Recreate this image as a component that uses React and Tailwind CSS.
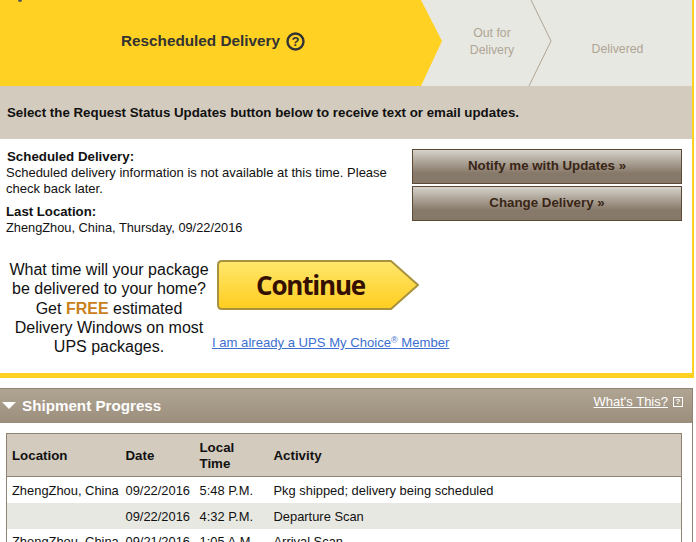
const rows = [
  { location: "ZhengZhou, China", date: "09/22/2016", time: "5:48 P.M.", activity: "Pkg shipped; delivery being scheduled" },
  { location: "", date: "09/22/2016", time: "4:32 P.M.", activity: "Departure Scan" },
  { location: "ZhengZhou, China", date: "09/21/2016", time: "1:05 A.M.", activity: "Arrival Scan" },
]

const ActionButton = ({ children }) => (
  <button className="block w-[270px] h-[35px] border border-[#5c4a36] bg-gradient-to-b from-[#d6d3cb] to-[#87796a] to-70% pb-[1px] text-[13.3px] font-bold text-[#3a2516]">
    {children}
  </button>
)

const App = () => {
  return (
    <div className="h-screen overflow-hidden bg-white font-['Liberation_Sans',Arial,sans-serif] text-[#111]">
      <div className="w-[694px] border-r-2 border-b-[5px] border-[#ffd123]">
        {/* status tracker */}
        <div className="relative h-[86px] bg-[#e8e8e2]">
          <svg className="absolute inset-0" width="692" height="86">
            <polygon points="0,0 421,0 442,41 421,86 0,86" fill="#ffd123" />
            <polyline points="531,0 551,41 529,86" fill="none" stroke="#afa595" strokeWidth="1" />
          </svg>
          <span className="absolute left-[18px] top-0 h-[2px] w-[4px] rounded-b-full bg-[#555]" />
          <div className="relative flex h-full items-center">
            <div className="flex w-[426px] items-center justify-center gap-[6px] pb-[3px] text-[15.3px] font-bold text-[#333]">
              Rescheduled Delivery
              <svg width="19" height="19" viewBox="0 0 19 19">
                <circle cx="9.5" cy="9.5" r="8" fill="none" stroke="#333" strokeWidth="2.4" />
                <text x="9.5" y="14" textAnchor="middle" fontSize="13" fontWeight="700" fill="#333">?</text>
              </svg>
            </div>
            <div className="ml-[7px] w-[118px] pb-[2px] text-center text-[12.3px] leading-[17px] text-[#afa595]">
              Out for
              <br />
              Delivery
            </div>
            <div className="ml-[4px] w-[125px] pt-[12px] text-center text-[12.3px] leading-[17px] text-[#afa595]">
              Delivered
            </div>
          </div>
        </div>

        <div className="flex h-[53px] items-center bg-[#d3cbbe] pl-[7px] pt-[1px] text-[13.3px] font-bold">
          Select the Request Status Updates button below to receive text or email updates.
        </div>

        {/* delivery details */}
        <div className="flex h-[234px] bg-white">
          <div className="w-[412px] shrink-0">
            <div className="pt-[10px] pl-[6px] pr-[20px] text-[12.8px] leading-[16px]">
              <div className="pl-[1px] text-[13.3px] font-bold">Scheduled Delivery:</div>
              <div className="text-[13px]">Scheduled delivery information is not available at this time. Please check back later.</div>
              <div className="mt-[7px] text-[13.2px] font-bold">Last Location:</div>
              <div>ZhengZhou, China, Thursday, 09/22/2016</div>
            </div>
            <div className="mt-[24px] flex">
              <div className="w-[212px] shrink-0 pl-[6px] text-center text-[16px] leading-[19.25px]">
                What time will your package be delivered to your home? Get{" "}
                <span className="font-bold text-[#c8811a]">FREE</span> estimated Delivery Windows on most UPS packages.
              </div>
              <div>
                <button className="relative block h-[51px] w-[204px] ml-[5px] font-['Open_Sans',sans-serif]">
                  <svg className="absolute inset-0" width="204" height="51">
                    <defs>
                      <linearGradient id="go" x1="0" y1="0" x2="0" y2="1">
                        <stop offset="0" stopColor="#ffe76d" />
                        <stop offset="1" stopColor="#ffcd1f" />
                      </linearGradient>
                    </defs>
                    <path
                      d="M5,1 H174 L201,25 L174,49 H5 Q1,49 1,45 V5 Q1,1 5,1 Z"
                      fill="url(#go)"
                      stroke="#a8923f"
                      strokeWidth="2"
                      strokeLinejoin="round"
                    />
                  </svg>
                  <span className="relative block pr-[17px] text-[26px] font-bold text-[#351000] tracking-[-1.2px]">Continue</span>
                </button>
                <a href="#" className="mt-[24px] block text-[13.1px] leading-[16px] text-[#3d6fd0] underline whitespace-nowrap">
                  I am already a UPS My Choice<sup className="text-[9px]">®</sup> Member
                </a>
              </div>
            </div>
          </div>
          <div className="pt-[10px] flex flex-col gap-[2px]">
            <ActionButton>Notify me with Updates »</ActionButton>
            <ActionButton>Change Delivery »</ActionButton>
          </div>
        </div>
      </div>

      {/* shipment progress */}
      <div className="mt-[10px] w-[693px] border-t border-r border-[#8f8373]">
        <div className="flex h-[34px] items-start justify-between bg-gradient-to-b from-[#b0a492] to-[#9b8e7d]">
          <div className="flex items-center gap-[6px] pl-[2px] pt-[8px]">
            <span className="h-0 w-0 border-x-[7px] border-t-[7px] border-x-transparent border-t-white" />
            <span className="text-[15.2px] leading-[17px] font-bold text-white">Shipment Progress</span>
          </div>
          <div className="flex items-center gap-[5px] pr-[9px] pt-[5px] text-[13px] leading-[16px] text-white">
            <a href="#" className="underline">What's This?</a>
            <span className="flex h-[10px] w-[10px] items-center justify-center border border-white text-[8px] leading-none font-bold">?</span>
          </div>
        </div>
        <div className="pt-[10px] pl-[6px] pr-[10px]">
          <table className="w-full table-fixed border-collapse border border-[#8f8373] text-[12.9px] leading-[16px]">
            <thead>
              <tr className="h-[43px] border-b border-[#8f8373] bg-[#d3cbbe] text-left text-[13.3px] font-bold">
                <th className="w-[119px] pl-[5px] pt-[2px]">Location</th>
                <th className="w-[74px] pt-[2px]">Date</th>
                <th className="w-[74px] pt-[2px]">Local<br />Time</th>
                <th className="pt-[2px]">Activity</th>
              </tr>
            </thead>
            <tbody>
              {rows.map((row, i) => (
                <tr key={i} className={i % 2 === 1 ? "h-[26px] bg-[#e8e8e2]" : "h-[26px] bg-white"}>
                  <td className="pl-[5px] pt-[2px] whitespace-nowrap">{row.location}</td>
                  <td className="pt-[2px]">{row.date}</td>
                  <td className="pt-[2px]">{row.time}</td>
                  <td className="pt-[2px]">{row.activity}</td>
                </tr>
              ))}
            </tbody>
          </table>
        </div>
      </div>
    </div>
  )
}

export default App
